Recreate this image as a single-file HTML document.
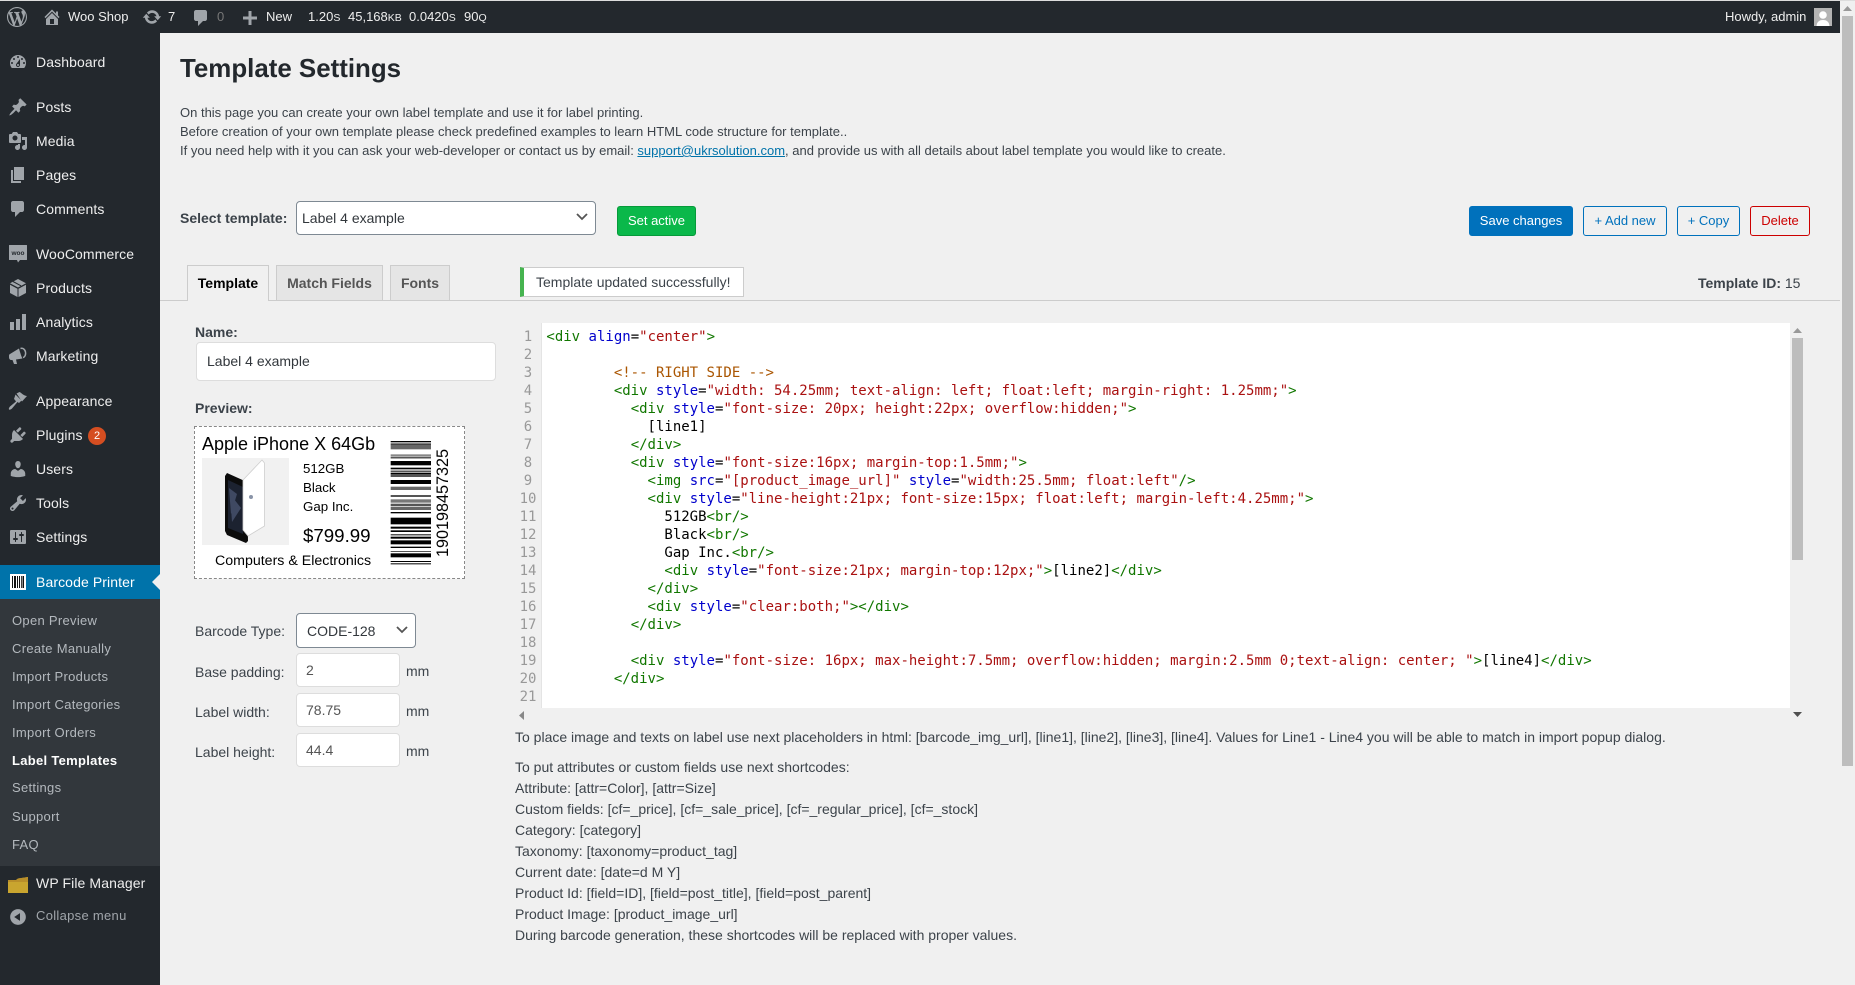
<!DOCTYPE html>
<html><head><meta charset="utf-8"><title>Template Settings</title>
<style>
html,body{margin:0;padding:0;width:1855px;height:985px;overflow:hidden;background:#f0f0f0;font-family:"Liberation Sans",Arial,sans-serif;font-size:14px;color:#3c434a}
.a{position:absolute;white-space:nowrap;line-height:20px;height:20px}
.m{color:#eee;font-size:14px;left:36px;letter-spacing:.1px}
.s{color:#b4b9be;font-size:13px;left:12px;letter-spacing:.3px}
.i{position:absolute;width:20px;height:20px;fill:#a0a5aa}
.b{position:absolute;box-sizing:border-box;border-radius:3px;font-size:13px;text-align:center;line-height:28px;height:30px;border:1px solid #0071bc;color:#0071bc;top:206px}
.inp{position:absolute;box-sizing:border-box;background:#fff;border:1px solid #ddd;border-radius:4px;height:34px;left:296px;width:104px;padding-left:9px;line-height:32px;color:#555;font-size:14px}
.tab{position:absolute;box-sizing:border-box;top:265px;height:35px;border:1px solid #ccc;border-bottom:0;background:#e5e5e5;font-weight:bold;text-align:center;line-height:35px;color:#555;font-size:14px}
#code{position:absolute;left:515px;top:323px;width:1275px;height:385px;background:#fff;overflow:hidden}
#gut{position:absolute;left:0;top:0;width:26px;height:385px;background:#f0f0f0;border-right:1px solid #e4e4e4}
pre{margin:0;position:absolute;font-family:"DejaVu Sans Mono",monospace;font-size:14px;line-height:18px}
#nums{left:0;top:5px;width:26px;text-align:center;color:#999}
#src{left:31.4px;top:5px;color:#000}
.t{color:#170}.n{color:#00c}.v{color:#a11}.c{color:#a50}
</style></head><body>

<!-- top strip + admin bar -->
<div style="position:absolute;left:0;top:0;width:1855px;height:1px;background:#ddd"></div>
<div style="position:absolute;left:0;top:1px;width:1840px;height:32px;background:#23282d"></div>
<svg class="i" style="left:7px;top:7px" viewBox="0 0 20 20"><path d="M20 10c0-5.51-4.49-10-10-10C4.48 0 0 4.49 0 10c0 5.52 4.48 10 10 10 5.51 0 10-4.48 10-10zM7.78 15.37L4.37 6.22c.55-.02 1.17-.08 1.17-.08.5-.06.44-1.13-.06-1.11 0 0-1.45.11-2.37.11-.18 0-.37 0-.58-.01C4.12 2.69 6.87 1.11 10 1.11c2.33 0 4.45.87 6.05 2.34-.68-.11-1.65.39-1.65 1.58 0 .74.45 1.36.9 2.1.35.61.55 1.36.55 2.46 0 1.49-1.4 5-1.4 5l-3.03-8.37c.54-.02.82-.17.82-.17.5-.05.44-1.25-.06-1.22 0 0-1.44.12-2.38.12-.87 0-2.33-.12-2.33-.12-.5-.03-.56 1.2-.06 1.22l.92.08 1.26 3.41zM17.41 10c.24-.64.74-1.87.43-4.25.7 1.29 1.05 2.71 1.05 4.25 0 3.29-1.73 6.24-4.4 7.78.97-2.59 1.94-5.2 2.92-7.78zM6.1 18.09C3.12 16.65 1.11 13.53 1.11 10c0-1.3.23-2.48.72-3.59C3.25 10.3 4.67 14.2 6.1 18.09zm4.03-6.63l2.58 6.98c-.86.29-1.76.45-2.71.45-.79 0-1.57-.11-2.29-.33.81-2.38 1.62-4.74 2.42-7.1z"/></svg>
<svg class="i" style="left:42px;top:7px" viewBox="0 0 20 20"><path d="M16 8.5l1.53 1.53-1.06 1.06L10 4.62l-6.47 6.47-1.06-1.06L10 2.5l4 4v-2h2v4zm-6-2.46l6 5.99V18H4v-5.97zM12 17v-5H8v5h4z"/></svg>
<div class="a" style="left:68px;top:7px;color:#eee;font-size:13px">Woo Shop</div>
<svg class="i" style="left:142px;top:7px" viewBox="0 0 20 20"><path d="M10.2 3.28c3.53 0 6.43 2.61 6.92 6h2.08l-3.5 4-3.5-4h2.32c-.45-1.97-2.21-3.45-4.32-3.45-1.45 0-2.73.71-3.54 1.78L4.95 5.66C6.23 4.2 8.11 3.28 10.2 3.28zm-.4 13.44c-3.52 0-6.43-2.61-6.92-6H.8l3.5-4c1.17 1.33 2.33 2.67 3.5 4H5.48c.45 1.97 2.21 3.45 4.32 3.45 1.45 0 2.73-.71 3.54-1.78l1.71 1.95c-1.28 1.46-3.15 2.38-5.25 2.38z"/></svg>
<div class="a" style="left:168px;top:7px;color:#eee;font-size:13px">7</div>
<svg class="i" style="left:191px;top:8px" viewBox="0 0 20 20"><path d="M5 2h9c1.1 0 2 .9 2 2v7c0 1.1-.9 2-2 2h-2l-5 5v-5H5c-1.1 0-2-.9-2-2V4c0-1.1.9-2 2-2z"/></svg>
<div class="a" style="left:217px;top:7px;color:#777;font-size:13px">0</div>
<svg class="i" style="left:240px;top:8px" viewBox="0 0 20 20"><path d="M8.5 3h3v5.5H17v3h-5.5V17h-3v-5.5H3v-3h5.5z"/></svg>
<div class="a" style="left:266px;top:7px;color:#eee;font-size:13px">New</div>
<div class="a" style="left:308px;top:7px;color:#eee;font-size:13px">1.20<span style="font-size:10.5px">S</span></div>
<div class="a" style="left:348px;top:7px;color:#eee;font-size:13px">45,168<span style="font-size:10.5px">KB</span></div>
<div class="a" style="left:409px;top:7px;color:#eee;font-size:13px">0.0420<span style="font-size:10.5px">S</span></div>
<div class="a" style="left:464px;top:7px;color:#eee;font-size:13px">90<span style="font-size:10.5px">Q</span></div>
<div class="a" style="left:1725px;top:7px;color:#eee;font-size:13px">Howdy, admin</div>
<svg style="position:absolute;left:1814px;top:8px" width="18" height="18" viewBox="0 0 18 18"><rect width="18" height="18" fill="#b4b4b4"/><circle cx="9" cy="7" r="3.8" fill="#fff"/><path d="M2.5 18c.5-4.5 3-6 6.5-6s6 1.500 6.500 6z" fill="#fff"/></svg>

<!-- sidebar -->
<div style="position:absolute;left:0;top:33px;width:160px;height:952px;background:#23282d"></div>
<div style="position:absolute;left:0;top:565px;width:160px;height:34px;background:#0073aa"></div>
<div style="position:absolute;left:0;top:599px;width:160px;height:267px;background:#32373c"></div>
<div style="position:absolute;left:152px;top:574px;width:0;height:0;border:8px solid transparent;border-right-color:#f0f0f0;border-left:0"></div>

<svg class="i" style="left:8px;top:52px" viewBox="0 0 20 20"><path d="M3.76 16h12.48c1.1-1.37 1.76-3.11 1.76-5 0-4.42-3.58-8-8-8s-8 3.58-8 8c0 1.89.66 3.63 1.76 5zM10 4c.55 0 1 .45 1 1s-.45 1-1 1-1-.45-1-1 .45-1 1-1zM6 6c.55 0 1 .45 1 1s-.45 1-1 1-1-.45-1-1 .45-1 1-1zm8 0c.55 0 1 .45 1 1s-.45 1-1 1-1-.45-1-1 .45-1 1-1zm-5.37 5.55L12 7v6c0 1.1-.9 2-2 2s-2-.9-2-2c0-.57.24-1.08.63-1.45zM4 10c.55 0 1 .45 1 1s-.45 1-1 1-1-.45-1-1 .45-1 1-1zm12 0c.55 0 1 .45 1 1s-.45 1-1 1-1-.45-1-1 .45-1 1-1zm-5 3c0-.55-.45-1-1-1s-1 .45-1 1 .45 1 1 1 1-.45 1-1z"/></svg>
<div class="a m" style="top:52px">Dashboard</div>
<svg class="i" style="left:8px;top:97px" viewBox="0 0 20 20"><path d="M10.44 3.02l1.82-1.82 6.36 6.35-1.83 1.82c-1.05-.68-2.48-.57-3.41.36l-.75.75c-.92.93-1.04 2.35-.35 3.41l-1.83 1.82-2.41-2.41-2.8 2.79c-.42.42-3.38 2.71-3.8 2.29s1.86-3.39 2.28-3.81l2.79-2.79L4.1 9.36l1.83-1.82c1.05.69 2.48.57 3.4-.36l.75-.75c.93-.92 1.05-2.35.36-3.41z"/></svg>
<div class="a m" style="top:97px">Posts</div>
<svg class="i" style="left:8px;top:131px" viewBox="0 0 20 20"><path d="M13 11V4c0-.55-.45-1-1-1h-1.670L9 1H5L3.670 3H2c-.55 0-1 .45-1 1v7c0 .55.45 1 1 1h10c.55 0 1-.45 1-1zM7 4.500c1.380 0 2.500 1.120 2.500 2.500S8.380 9.500 7 9.500 4.500 8.380 4.500 7 5.620 4.500 7 4.500zM14 6h5v10.500c0 1.380-1.120 2.500-2.500 2.500S14 17.880 14 16.500s1.120-2.500 2.500-2.500c.17 0 .34.02.5.05V9h-3V6zm-4 8.050V13h2v3.500c0 1.380-1.120 2.500-2.500 2.500S7 17.880 7 16.500 8.120 14 9.500 14c.17 0 .34.02.5.05z"/></svg>
<div class="a m" style="top:131px">Media</div>
<svg class="i" style="left:8px;top:165px" viewBox="0 0 20 20"><path d="M6 15V2h10v13H6zm-1 1h8v2H3V5h2v11z"/></svg>
<div class="a m" style="top:165px">Pages</div>
<svg class="i" style="left:8px;top:199px" viewBox="0 0 20 20"><path d="M5 2h9c1.100 0 2 .9 2 2v7c0 1.100-.9 2-2 2h-2l-5 5v-5H5c-1.100 0-2-.9-2-2V4c0-1.100.9-2 2-2z"/></svg>
<div class="a m" style="top:199px">Comments</div>

<svg class="i" style="left:8px;top:244px" viewBox="0 0 20 20"><path d="M1.500 1h17c.3 0 .5.2.5.5v14c0 .3-.2.5-.5.5H12l-2 2.500L9 16H1.500c-.3 0-.5-.2-.5-.5v-14c0-.3.2-.5.5-.5z"/><text x="10" y="11" font-size="6.500" font-weight="bold" text-anchor="middle" fill="#23282d" font-family="Liberation Sans">woo</text></svg>
<div class="a m" style="top:244px">WooCommerce</div>
<svg class="i" style="left:8px;top:278px" viewBox="0 0 20 20"><path d="M10 1l8 4.200-8 4.300-8-4.300zM2 6.800l7.500 4v8.200L2 15zM18 6.800v8.200l-7.500 4v-8.200z"/><path d="M5 3.500l8 4.300" stroke="#23282d" stroke-width="1" fill="none"/></svg>
<div class="a m" style="top:278px">Products</div>
<svg class="i" style="left:8px;top:312px" viewBox="0 0 20 20"><path d="M18 18V2h-4v16h4zm-6 0V7H8v11h4zm-6 0v-8H2v8h4z"/></svg>
<div class="a m" style="top:312px">Analytics</div>
<svg class="i" style="left:8px;top:346px" viewBox="0 0 20 20"><path d="M2 8l9-5.500c.5 2 1 3.500 1.500 5s1 3.500 2 5L8 13.500 9 18H6l-1.500-4H3.500C2 14 1 13 1 11s0-2.500 1-3z"/><path d="M12.500 2.500c2.500-.8 4.500 1 5 3.500s-.5 5-2.500 5.500" fill="none" stroke="#a0a5aa" stroke-width="1.500"/></svg>
<div class="a m" style="top:346px">Marketing</div>

<svg class="i" style="left:8px;top:391px" viewBox="0 0 20 20"><path d="M8.500 2.500l3-1.500c1.500.5 2 1.500 3.500 2.500s3 1.500 4 1.500l-5 5.500zM7.500 3.500l6 6-2.500 2.500-1.500-1-5.500 6.500c-1 1-2.500 1.500-3 1-.5-.5 0-2 1-3L8 10.500l-1-1.500-1-1z"/></svg>
<div class="a m" style="top:391px">Appearance</div>
<svg class="i" style="left:8px;top:425px" viewBox="0 0 20 20"><path d="M13.110 4.360L9.870 7.600 8 5.730l3.240-3.240c.35-.34 1.050-.2 1.560.32.52.51.66 1.210.31 1.550zm-8 1.770l.91-1.120 9.010 9.010-1.190.84c-.71.71-2.630 1.160-3.820 1.160H6.140L4.900 17.260c-.59.59-1.540.59-2.120 0-.59-.58-.59-1.530 0-2.120l1.240-1.240v-3.880c0-1.130.4-3.190 1.090-3.890zm7.260 3.970l3.240-3.240c.34-.35 1.040-.21 1.550.31.52.51.66 1.210.31 1.550l-3.240 3.250z"/></svg>
<div class="a m" style="top:425px">Plugins</div>
<div class="a" style="left:88px;top:427px;width:18px;height:18px;border-radius:50%;background:#d54e21;color:#fff;font-size:11px;line-height:18px;text-align:center">2</div>
<svg class="i" style="left:8px;top:459px" viewBox="0 0 20 20"><path d="M10 9.250c-2.270 0-2.730-3.440-2.730-3.440C7 4.020 7.820 2 9.970 2c2.160 0 2.980 2.020 2.710 3.810 0 0-.41 3.440-2.680 3.440zm0 2.570L12.720 10c2.390 0 4.520 2.330 4.520 4.530v2.490s-3.650 1.130-7.240 1.130c-3.650 0-7.240-1.130-7.240-1.130v-2.490c0-2.250 1.940-4.480 4.470-4.480z"/></svg>
<div class="a m" style="top:459px">Users</div>
<svg class="i" style="left:8px;top:493px" viewBox="0 0 20 20"><path d="M16.680 9.770c-1.340 1.340-3.300 1.670-4.950.99l-5.410 6.520c-.99.99-2.590.99-3.580 0s-.99-2.590 0-3.570l6.520-5.420c-.68-1.650-.35-3.610.99-4.950 1.280-1.280 3.120-1.620 4.720-1.060l-2.890 2.890 2.820 2.820 2.860-2.870c.53 1.580.18 3.390-1.080 4.650zM3.810 16.210c.4.39 1.040.39 1.430 0 .4-.4.4-1.040 0-1.430-.39-.4-1.030-.4-1.430 0-.39.39-.39 1.030 0 1.430z"/></svg>
<div class="a m" style="top:493px">Tools</div>
<svg class="i" style="left:8px;top:527px" viewBox="0 0 20 20"><path d="M18 16V4c0-.55-.45-1-1-1H3c-.55 0-1 .45-1 1v12c0 .55.45 1 1 1h14c.55 0 1-.45 1-1zM8 11h1c.55 0 1 .45 1 1s-.45 1-1 1H8v1.500c0 .28-.22.5-.5.5s-.5-.22-.5-.5V13H6c-.55 0-1-.45-1-1s.45-1 1-1h1V5.500c0-.28.22-.5.5-.5s.5.22.5.5V11zm5-2h-1c-.55 0-1-.45-1-1s.45-1 1-1h1V5.500c0-.28.22-.5.5-.5s.5.22.5.5V7h1c.55 0 1 .45 1 1s-.45 1-1 1h-1v5.500c0 .28-.22.5-.5.5s-.5-.22-.5-.5V9z"/></svg>
<div class="a m" style="top:527px">Settings</div>

<svg style="position:absolute;left:10px;top:574px" width="16" height="16" viewBox="0 0 16 16"><rect width="16" height="16" fill="#fff"/><path d="M2 2h1v12H2zM4 2h2v12H4zM7 2h1v12H7zM9 2h1v12H9zM11 2h.8v12H11zM12.500 2h1.500v12h-1.500z" fill="#111"/></svg>
<div class="a m" style="top:572px;color:#fff">Barcode Printer</div>

<div class="a s" style="top:611px">Open Preview</div>
<div class="a s" style="top:639px">Create Manually</div>
<div class="a s" style="top:667px">Import Products</div>
<div class="a s" style="top:695px">Import Categories</div>
<div class="a s" style="top:723px">Import Orders</div>
<div class="a s" style="top:751px;color:#fff;font-weight:bold">Label Templates</div>
<div class="a s" style="top:778px">Settings</div>
<div class="a s" style="top:807px">Support</div>
<div class="a s" style="top:835px">FAQ</div>

<svg style="position:absolute;left:8px;top:876px" width="20" height="18" viewBox="0 0 20 18"><path d="M0 4h8l2-1.500L20 1v16H0z" fill="#c9a52f"/><path d="M0 4h8l2-1.500L20 1v5H0z" fill="#b98f2a"/></svg>
<div class="a m" style="top:873px">WP File Manager</div>
<svg class="i" style="left:8px;top:907px" viewBox="0 0 20 20"><path d="M10 2.160c4.330 0 7.840 3.510 7.840 7.840s-3.510 7.840-7.840 7.840S2.160 14.330 2.160 10 5.710 2.160 10 2.160zm2 11.720V6.120L6.180 9.970z"/></svg>
<div class="a" style="left:36px;top:906px;color:#a0a5aa;font-size:13px;letter-spacing:.3px">Collapse menu</div>

<!-- header content -->
<div class="a" style="left:180px;top:54px;height:30px;line-height:30px;font-size:25.900px;font-weight:bold;color:#23282d">Template Settings</div>
<div class="a" style="left:180px;top:103px;font-size:13px">On this page you can create your own label template and use it for label printing.</div>
<div class="a" style="left:180px;top:122px;font-size:13px">Before creation of your own template please check predefined examples to learn HTML code structure for template..</div>
<div class="a" style="left:180px;top:141px;font-size:13px">If you need help with it you can ask your web-developer or contact us by email: <span style="color:#0073aa;text-decoration:underline">support@ukrsolution.com</span>, and provide us with all details about label template you would like to create.</div>

<div class="a" style="left:180px;top:208px;font-weight:bold">Select template:</div>
<div style="position:absolute;box-sizing:border-box;left:296px;top:201px;width:300px;height:34px;background:#fff;border:1px solid #7e8993;border-radius:4px;line-height:32px;padding-left:5px;color:#32373c;font-size:14px">Label 4 example</div>
<svg style="position:absolute;left:575px;top:212px" width="14" height="10" viewBox="0 0 14 10"><path d="M2 2l5 5 5-5" fill="none" stroke="#555" stroke-width="1.800"/></svg>
<div class="b" style="left:617px;width:79px;background:#0ab84a;border-color:#069a3a;color:#fff">Set active</div>

<div class="b" style="left:1469px;width:104px;background:#0071bc;color:#fff">Save changes</div>
<div class="b" style="left:1583px;width:84px">+ Add new</div>
<div class="b" style="left:1677px;width:63px">+ Copy</div>
<div class="b" style="left:1750px;width:60px;border-color:#c00;color:#c00">Delete</div>

<!-- tabs -->
<div style="position:absolute;left:160px;top:300px;width:1680px;height:1px;background:#ccc"></div>
<div class="tab" style="left:187px;width:82px;height:36px;background:#f0f0f0;color:#000">Template</div>
<div class="tab" style="left:276px;width:107px">Match Fields</div>
<div class="tab" style="left:390px;width:60px">Fonts</div>
<div style="position:absolute;box-sizing:border-box;left:520px;top:267px;width:224px;height:30px;background:#fff;border:1px solid #ccc;border-left:4px solid #46b450;line-height:28px;padding-left:12px;font-size:14px;white-space:nowrap">Template updated successfully!</div>
<div class="a" style="left:1698px;top:273px"><b>Template ID:</b> 15</div>

<!-- left form -->
<div class="a" style="left:195px;top:322px;font-weight:bold">Name:</div>
<div style="position:absolute;box-sizing:border-box;left:196px;top:342px;width:300px;height:39px;background:#fff;border:1px solid #ddd;border-radius:4px;line-height:37px;padding-left:10px;color:#32373c">Label 4 example</div>
<div class="a" style="left:195px;top:398px;font-weight:bold">Preview:</div>

<div style="position:absolute;box-sizing:border-box;left:194px;top:426px;width:271px;height:153px;background:#fff;border:1px dashed #888"></div>
<div class="a" style="left:202px;top:432px;font-size:18px;color:#000;height:24px;line-height:24px">Apple iPhone X 64Gb</div>
<svg style="position:absolute;left:202px;top:458px" width="87" height="87" viewBox="0 0 87 87"><rect width="87" height="87" fill="#f1f1f1"/><path d="M23 18l2-3 20 9 1 59-2 2-19-8-2-4z" fill="#0c0c0c"/><path d="M26 22l15 7v47l-15-6z" fill="#1c2230"/><path d="M28 36l11 14-9 14zM27 30l8 6-6 20z" fill="#4e5a78" opacity=".7"/><path d="M60 2l2.500 3v63L46 78l-5-6V22z" fill="#fff" stroke="#cfcfcf" stroke-width=".8"/><circle cx="49" cy="39" r="2" fill="#8a94a8"/></svg>
<div class="a" style="left:303px;top:459px;font-size:13.300px;color:#000">512GB</div>
<div class="a" style="left:303px;top:478px;font-size:13.300px;color:#000">Black</div>
<div class="a" style="left:303px;top:497px;font-size:13.300px;color:#000">Gap Inc.</div>
<div class="a" style="left:303px;top:524px;font-size:18.700px;color:#000;height:24px;line-height:24px">$799.99</div>
<div class="a" style="left:215px;top:551px;font-size:14.200px;color:#000">Computers &amp; Electronics</div>
<svg style="position:absolute;left:385px;top:436px" width="70" height="134" viewBox="0 0 210 402"><g fill="#000"><rect x="17" y="15" width="121" height="4"/><rect x="17" y="22" width="121" height="5" fill="#444"/><rect x="17" y="27" width="121" height="13" fill="#666"/><rect x="17" y="55" width="121" height="7" fill="#888"/><rect x="17" y="64" width="121" height="3"/><rect x="17" y="75" width="121" height="13"/><rect x="17" y="95" width="121" height="5"/><rect x="17" y="104" width="121" height="3"/><rect x="17" y="110" width="121" height="6"/><rect x="17" y="118" width="121" height="4"/><rect x="17" y="132" width="121" height="12"/><rect x="17" y="152" width="121" height="10" fill="#666"/><rect x="17" y="178" width="121" height="4"/><rect x="17" y="190" width="121" height="10" fill="#777"/><rect x="17" y="203" width="121" height="7" fill="#555"/><rect x="17" y="212" width="121" height="10" fill="#666"/><rect x="17" y="228" width="121" height="4"/><rect x="17" y="245" width="121" height="20"/><rect x="17" y="272" width="121" height="6"/><rect x="17" y="283" width="121" height="5"/><rect x="17" y="295" width="121" height="3"/><rect x="17" y="302" width="121" height="6"/><rect x="17" y="313" width="121" height="12"/><rect x="17" y="332" width="121" height="4"/><rect x="17" y="345" width="121" height="3" fill="#555"/><rect x="17" y="352" width="121" height="12"/><rect x="17" y="375" width="121" height="3"/><rect x="17" y="382" width="121" height="3"/></g></svg>
<div class="a" style="left:389px;top:493px;width:108px;height:20px;font-size:16.200px;color:#000;transform:rotate(-90deg);text-align:center">190198457325</div>

<div class="a" style="left:195px;top:621px">Barcode Type:</div>
<div style="position:absolute;box-sizing:border-box;left:296px;top:613px;width:120px;height:35px;background:#fff;border:1px solid #7e8993;border-radius:4px;line-height:35px;padding-left:10px;color:#32373c">CODE-128</div>
<svg style="position:absolute;left:395px;top:625px" width="14" height="10" viewBox="0 0 14 10"><path d="M2 2l5 5 5-5" fill="none" stroke="#555" stroke-width="1.800"/></svg>
<div class="a" style="left:195px;top:662px">Base padding:</div>
<div class="inp" style="top:653px">2</div>
<div class="a" style="left:406px;top:661px">mm</div>
<div class="a" style="left:195px;top:702px">Label width:</div>
<div class="inp" style="top:693px">78.75</div>
<div class="a" style="left:406px;top:701px">mm</div>
<div class="a" style="left:195px;top:742px">Label height:</div>
<div class="inp" style="top:733px">44.4</div>
<div class="a" style="left:406px;top:741px">mm</div>

<!-- code editor -->
<div id="code"><div id="gut"></div>
<pre id="nums">1
2
3
4
5
6
7
8
9
10
11
12
13
14
15
16
17
18
19
20
21</pre>
<pre id="src"><span class="t">&lt;div</span> <span class="n">align</span>=<span class="v">"center"</span><span class="t">&gt;</span>

        <span class="c">&lt;!-- RIGHT SIDE --&gt;</span>
        <span class="t">&lt;div</span> <span class="n">style</span>=<span class="v">"width: 54.25mm; text-align: left; float:left; margin-right: 1.25mm;"</span><span class="t">&gt;</span>
          <span class="t">&lt;div</span> <span class="n">style</span>=<span class="v">"font-size: 20px; height:22px; overflow:hidden;"</span><span class="t">&gt;</span>
            [line1]
          <span class="t">&lt;/div&gt;</span>
          <span class="t">&lt;div</span> <span class="n">style</span>=<span class="v">"font-size:16px; margin-top:1.5mm;"</span><span class="t">&gt;</span>
            <span class="t">&lt;img</span> <span class="n">src</span>=<span class="v">"[product_image_url]"</span> <span class="n">style</span>=<span class="v">"width:25.5mm; float:left"</span><span class="t">/&gt;</span>
            <span class="t">&lt;div</span> <span class="n">style</span>=<span class="v">"line-height:21px; font-size:15px; float:left; margin-left:4.25mm;"</span><span class="t">&gt;</span>
              512GB<span class="t">&lt;br/&gt;</span>
              Black<span class="t">&lt;br/&gt;</span>
              Gap Inc.<span class="t">&lt;br/&gt;</span>
              <span class="t">&lt;div</span> <span class="n">style</span>=<span class="v">"font-size:21px; margin-top:12px;"</span><span class="t">&gt;</span>[line2]<span class="t">&lt;/div&gt;</span>
            <span class="t">&lt;/div&gt;</span>
            <span class="t">&lt;div</span> <span class="n">style</span>=<span class="v">"clear:both;"</span><span class="t">&gt;&lt;/div&gt;</span>
          <span class="t">&lt;/div&gt;</span>

          <span class="t">&lt;div</span> <span class="n">style</span>=<span class="v">"font-size: 16px; max-height:7.5mm; overflow:hidden; margin:2.5mm 0;text-align: center; "</span><span class="t">&gt;</span>[line4]<span class="t">&lt;/div&gt;</span>
        <span class="t">&lt;/div&gt;</span>
</pre></div>

<!-- code scrollbars -->
<div style="position:absolute;left:1792px;top:338px;width:11px;height:222px;background:#bdbdbd"></div>
<svg style="position:absolute;left:1793px;top:328px" width="9" height="6"><path d="M4.500 0L9 5H0z" fill="#999"/></svg>
<svg style="position:absolute;left:1793px;top:712px" width="9" height="6"><path d="M4.500 5L9 0H0z" fill="#505050"/></svg>
<svg style="position:absolute;left:519px;top:711px" width="6" height="9"><path d="M0 4.500L5 0v9z" fill="#888"/></svg>

<!-- help text -->
<div class="a" style="left:515px;top:727px">To place image and texts on label use next placeholders in html: [barcode_img_url], [line1], [line2], [line3], [line4]. Values for Line1 - Line4 you will be able to match in import popup dialog.</div>
<div class="a" style="left:515px;top:757px">To put attributes or custom fields use next shortcodes:</div>
<div class="a" style="left:515px;top:778px">Attribute: [attr=Color], [attr=Size]</div>
<div class="a" style="left:515px;top:799px">Custom fields: [cf=_price], [cf=_sale_price], [cf=_regular_price], [cf=_stock]</div>
<div class="a" style="left:515px;top:820px">Category: [category]</div>
<div class="a" style="left:515px;top:841px">Taxonomy: [taxonomy=product_tag]</div>
<div class="a" style="left:515px;top:862px">Current date: [date=d M Y]</div>
<div class="a" style="left:515px;top:883px">Product Id: [field=ID], [field=post_title], [field=post_parent]</div>
<div class="a" style="left:515px;top:904px">Product Image: [product_image_url]</div>
<div class="a" style="left:515px;top:925px">During barcode generation, these shortcodes will be replaced with proper values.</div>

<!-- page scrollbar -->
<div style="position:absolute;left:1842px;top:16px;width:11px;height:750px;background:#bdbdbd"></div>
<svg style="position:absolute;left:1843px;top:6px" width="9" height="6"><path d="M4.500 0L9 5H0z" fill="#999"/></svg>
</body></html>
